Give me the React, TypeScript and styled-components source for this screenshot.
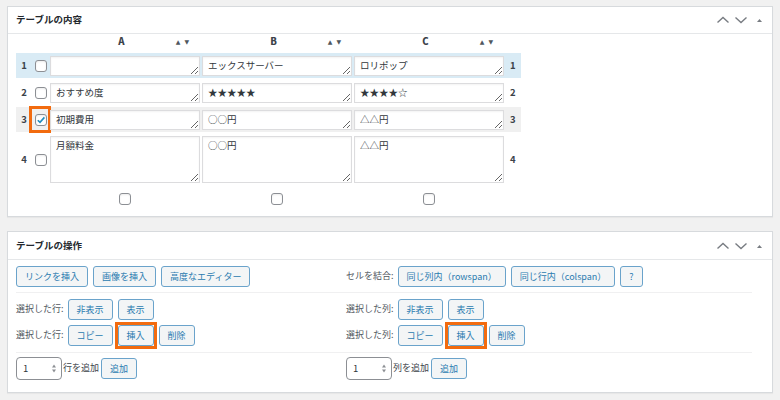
import React from 'react'
import styled, { createGlobalStyle } from 'styled-components'

const GlobalStyle = createGlobalStyle`
  body {
    margin: 0;
    background: #f1f1f1;
    font-family: "Noto Sans CJK JP", "Liberation Sans", sans-serif;
    color: #32373c;
    line-height: 1.2;
  }
`

const Page = styled.div`
  padding: 6px 7px;
  display: flex;
  flex-direction: column;
  gap: 14px;
`

const Panel = styled.section`
  background: #fff;
  border: 1px solid #d7dadd;
  box-shadow: 0 1px 1px rgba(0, 0, 0, 0.04);
`

const PanelHeader = styled.header<{ $tall?: boolean }>`
  display: flex;
  align-items: center;
  justify-content: space-between;
  height: ${p => (p.$tall ? '27px' : '26px')};
  padding: 0 6px 0 8px;
  border-bottom: 1px solid #e5e7e9;

  h2 {
    margin: 0;
    font-size: 9.5px;
    font-weight: bold;
    color: #23282d;
  }
`

const Handles = styled.div`
  display: flex;
  align-items: center;
  gap: 4px;
`

const PanelBody = styled.div<{ $bottom?: number }>`
  padding: 0 8px ${p => p.$bottom ?? 9}px;
`

const TableGrid = styled.div`
  display: flex;
  flex-direction: column;
  gap: 2px;
  width: 505px;
`

const Row = styled.div<{ $tone?: 'blue' | 'gray' }>`
  display: grid;
  grid-template-columns: 14px 20px 152px 152px 152px 15px;
  align-items: center;
  height: 25px;
  background: ${p => (p.$tone === 'blue' ? '#d9ebf5' : p.$tone === 'gray' ? '#f0f0f0' : 'transparent')};
`

const TallRow = styled(Row)`
  height: 51px;
`

const HeadRow = styled(Row)`
  height: 16px;
  margin-bottom: 1px;
`

const FootRow = styled(Row)`
  height: 16px;
  margin-top: 4px;
`

const RowNum = styled.span<{ $right?: boolean }>`
  font-size: 9.5px;
  font-weight: bold;
  color: #3c434a;
  text-align: ${p => (p.$right ? 'left' : 'center')};
  padding-left: ${p => (p.$right ? '4px' : '2px')};
`

const CheckCell = styled.span<{ $marked?: boolean }>`
  align-self: stretch;
  display: flex;
  align-items: center;
  justify-content: center;
  padding-left: 2px;
  outline: ${p => (p.$marked ? '3px solid #f26b0f' : 'none')};
  outline-offset: -2px;
`

const ColHead = styled.div`
  display: grid;
  grid-template-columns: 1fr auto 1fr;
  align-items: center;
  font-size: 9.5px;
  font-weight: bold;
  color: #3c434a;
  padding-right: 9px;

  b {
    grid-column: 2;
  }
`

const SortArrows = styled.span`
  justify-self: end;
  font-family: "DejaVu Sans", sans-serif;
  font-size: 6px;
  line-height: 1;
  letter-spacing: 4px;
  color: #50575e;
`

const CenterCell = styled.div`
  display: flex;
  justify-content: center;
  padding-right: 2px;
`

const Cell = styled.textarea<{ $tall?: boolean }>`
  box-sizing: border-box;
  width: 150px;
  height: ${p => (p.$tall ? '47px' : '20px')};
  padding: 1px 5px;
  border: 1px solid #dcdcde;
  background: #fff;
  box-shadow: inset 0 1px 2px rgba(0, 0, 0, 0.05);
  font-family: "Noto Sans CJK JP", "Liberation Sans", sans-serif;
  font-size: 9.5px;
  line-height: 15px;
  color: #32373c;
  resize: vertical;
  overflow: hidden;
`

const Box = styled.span`
  box-sizing: border-box;
  width: 12px;
  height: 12px;
  border: 1px solid #8c8f94;
  border-radius: 3px;
  background: #fff;
  display: inline-flex;
  align-items: center;
  justify-content: center;
  box-shadow: inset 0 1px 2px rgba(0, 0, 0, 0.08);
`

const Checkbox: React.FC<{ checked?: boolean }> = ({ checked }) => (
  <Box>
    {checked && (
      <svg width="10" height="10" viewBox="0 0 10 10">
        <path d="M1.8 5.2 L4 7.4 L8.4 2.4" fill="none" stroke="#1e8cbe" strokeWidth="1.6" />
      </svg>
    )}
  </Box>
)

const Section = styled.div<{ $first?: boolean; $last?: boolean }>`
  display: grid;
  grid-template-columns: 330px 1fr;
  row-gap: 5px;
  margin-right: 12px;
  padding: ${p => (p.$first ? '6px 0 5px' : p.$last ? '4px 0 0' : '6px 0 6px')};
  border-top: ${p => (p.$first ? 'none' : '1px solid #f0f0f1')};
`

const Line = styled.div`
  display: flex;
  align-items: center;
  gap: 5px;
  height: 21px;
  font-size: 9px;
  color: #50575e;
`

const AddLine = styled(Line)`
  height: 23px;
`

const Label = styled.span`
  margin-right: -1px;
  white-space: nowrap;
`

const Button = styled.button`
  height: 21px;
  padding: 0 8px;
  border: 1px solid #6aa3cb;
  border-radius: 3px;
  background: #f3f5f6;
  color: #2a7bb0;
  font-family: "Noto Sans CJK JP", "Liberation Sans", sans-serif;
  font-size: 9px;
  line-height: 1;
  white-space: nowrap;
`

const Marked = styled.span`
  display: inline-flex;
  margin: -3px -3px;
  border: 3px solid #f26b0f;
  background: #fff;
`

const NumberField = styled.label`
  box-sizing: border-box;
  display: flex;
  align-items: center;
  justify-content: space-between;
  width: 46px;
  height: 23px;
  padding: 0 5px 0 6px;
  border: 1px solid #8c8f94;
  border-radius: 4px;
  background: #fff;
  font-size: 9.5px;
  color: #32373c;
`

const AddText = styled.span`
  margin: 0 -3px 0 -4px;
  color: #3c434a;
`

const Spin = () => (
  <svg width="4" height="9" viewBox="0 0 4 9">
    <path d="M0 3.5 L2 0.5 L4 3.5Z M0 5.5 L2 8.5 L4 5.5Z" fill="#8c8f94" />
  </svg>
)

const HeaderIcons = () => (
  <Handles>
    <svg width="14" height="8" viewBox="0 0 14 8">
      <path d="M1.5 6.5 L7 1.5 L12.5 6.5" fill="none" stroke="#787c82" strokeWidth="1.4" />
    </svg>
    <svg width="14" height="8" viewBox="0 0 14 8">
      <path d="M1.5 1.5 L7 6.5 L12.5 1.5" fill="none" stroke="#787c82" strokeWidth="1.4" />
    </svg>
    <svg width="14" height="8" viewBox="0 0 14 8">
      <path d="M5 6 L7.5 3 L10 6Z" fill="#787c82" />
    </svg>
  </Handles>
)

const rows = [
  { cells: ['', 'エックスサーバー', 'ロリポップ'], tone: 'blue' as const },
  { cells: ['おすすめ度', '★★★★★', '★★★★☆'] },
  { cells: ['初期費用', '○○円', '△△円'], tone: 'gray' as const, checked: true },
  { cells: ['月額料金', '○○円', '△△円'], tall: true },
]

const RowOps: React.FC<{ label: string }> = ({ label }) => (
  <Line>
    <Label>{label}</Label>
    <Button>コピー</Button>
    <Marked><Button>挿入</Button></Marked>
    <Button>削除</Button>
  </Line>
)

const App: React.FC = () => (
  <>
    <GlobalStyle />
    <Page>
      <Panel>
        <PanelHeader>
          <h2>テーブルの内容</h2>
          <HeaderIcons />
        </PanelHeader>
        <PanelBody>
          <TableGrid>
            <HeadRow>
              <span />
              <span />
              {['A', 'B', 'C'].map(c => (
                <ColHead key={c}>
                  <b>{c}</b>
                  <SortArrows>▲▼</SortArrows>
                </ColHead>
              ))}
              <span />
            </HeadRow>
            {rows.map((r, i) => {
              const R = r.tall ? TallRow : Row
              return (
                <R key={i} $tone={r.tone}>
                  <RowNum>{i + 1}</RowNum>
                  <CheckCell $marked={r.checked}>
                    <Checkbox checked={r.checked} />
                  </CheckCell>
                  {r.cells.map((c, j) => (
                    <Cell key={j} $tall={r.tall} defaultValue={c} readOnly />
                  ))}
                  <RowNum $right>{i + 1}</RowNum>
                </R>
              )
            })}
            <FootRow>
              <span />
              <span />
              <CenterCell><Checkbox /></CenterCell>
              <CenterCell><Checkbox /></CenterCell>
              <CenterCell><Checkbox /></CenterCell>
              <span />
            </FootRow>
          </TableGrid>
        </PanelBody>
      </Panel>

      <Panel>
        <PanelHeader $tall>
          <h2>テーブルの操作</h2>
          <HeaderIcons />
        </PanelHeader>
        <PanelBody $bottom={12}>
          <Section $first>
            <Line>
              <Button>リンクを挿入</Button>
              <Button>画像を挿入</Button>
              <Button>高度なエディター</Button>
            </Line>
            <Line>
              <Label>セルを結合:</Label>
              <Button>同じ列内（rowspan）</Button>
              <Button>同じ行内（colspan）</Button>
              <Button>?</Button>
            </Line>
          </Section>
          <Section>
            <Line>
              <Label>選択した行:</Label>
              <Button>非表示</Button>
              <Button>表示</Button>
            </Line>
            <Line>
              <Label>選択した列:</Label>
              <Button>非表示</Button>
              <Button>表示</Button>
            </Line>
            <RowOps label="選択した行:" />
            <RowOps label="選択した列:" />
          </Section>
          <Section $last>
            <AddLine>
              <NumberField>1<Spin /></NumberField>
              <AddText>行を追加</AddText>
              <Button>追加</Button>
            </AddLine>
            <AddLine>
              <NumberField>1<Spin /></NumberField>
              <AddText>列を追加</AddText>
              <Button>追加</Button>
            </AddLine>
          </Section>
        </PanelBody>
      </Panel>
    </Page>
  </>
)

export default App
